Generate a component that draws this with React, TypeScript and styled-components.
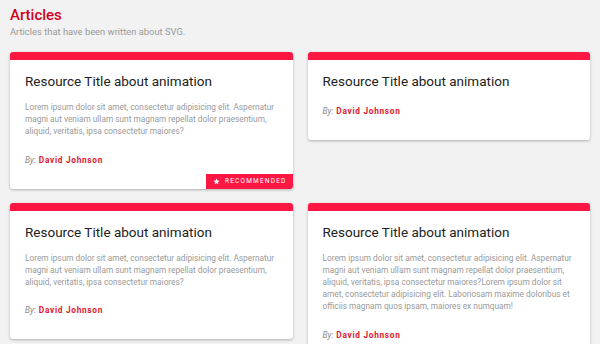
import React from "react";
import styled, { createGlobalStyle } from "styled-components";

const GlobalStyle = createGlobalStyle`
  html, body {
    margin: 0;
    padding: 0;
    background: #f2f2f2;
    font-family: Roboto, "Liberation Sans", sans-serif;
  }
`;

const Page = styled.div`
  padding: 6px 10px 20px;
`;

const Heading = styled.h1`
  margin: 0;

  font-size: 15px;
  font-weight: 500;
  line-height: 18px;
  color: #d0021b;
`;

const Subtitle = styled.p`
  margin: 2px 0 0;

  font-size: 9.4px;
  line-height: 12px;
  color: #999;
`;

const Grid = styled.div`
  display: grid;
  grid-template-columns: 1fr 1fr;
  column-gap: 15px;
  row-gap: 14px;
  align-items: start;

  margin-top: 14px;
`;

const Card = styled.article`
  overflow: hidden;

  position: relative;

  border-top: 8px solid #ff1744;
  border-radius: 3px;

  background: #fff;
  box-shadow: 0 1px 3px rgba(0, 0, 0, 0.28);
`;

const Body = styled.div`
  padding: 13px 12px 23px 15px;
`;

const Title = styled.h2`
  margin: 0;

  font-size: 13.5px;
  font-weight: 400;
  line-height: 17px;
  color: #222;
`;

const Excerpt = styled.p`
  margin: 11px 0 0;

  font-size: 8.3px;
  line-height: 12.2px;
  color: #9a9a9a;
`;

const Byline = styled.p<{ $spaced: boolean }>`
  margin: ${(p) => (p.$spaced ? "16px" : "15px")} 0 0;

  font-size: 8.3px;
  line-height: 12px;
`;

const By = styled.span`
  font-style: italic;
  color: #888;
`;

const Author = styled.span`
  margin-left: 3px;

  font-weight: 700;
  letter-spacing: 0.7px;
  color: #e0182d;
`;

const Badge = styled.div`
  display: flex;
  align-items: center;
  gap: 5px;

  position: absolute;
  right: 0;
  bottom: 0;

  height: 15px;
  padding: 0 6px 0 7px;

  background: #ff1744;

  font-size: 6.5px;
  letter-spacing: 1.2px;
  color: #fff;
`;

const Star = () => (
  <svg width="7" height="7" viewBox="0 0 24 24" fill="#fff">
    <path d="M12 1.8l3.1 7 7.4.6-5.6 4.9 1.7 7.4L12 17.8l-6.6 3.9 1.7-7.4-5.6-4.9 7.4-.6z" />
  </svg>
);

type Article = {
  excerpt?: string;
  recommended?: boolean;
};

const SHORT =
  "Lorem ipsum dolor sit amet, consectetur adipisicing elit. Aspernatur magni aut veniam ullam sunt magnam repellat dolor praesentium, aliquid, veritatis, ipsa consectetur maiores?";

const LONG =
  SHORT +
  "Lorem ipsum dolor sit amet, consectetur adipisicing elit. Laboriosam maxime doloribus et officiis magnam quos ipsam, maiores ex numquam!";

const articles: Article[] = [
  { excerpt: SHORT, recommended: true },
  {},
  { excerpt: SHORT },
  { excerpt: LONG },
];

export default function App() {
  return (
    <>
      <GlobalStyle />
      <Page>
        <Heading>Articles</Heading>
        <Subtitle>Articles that have been written about SVG.</Subtitle>
        <Grid>
          {articles.map((a, i) => (
            <Card key={i}>
              <Body>
                <Title>Resource Title about animation</Title>
                {a.excerpt && <Excerpt>{a.excerpt}</Excerpt>}
                <Byline $spaced={!!a.excerpt}>
                  <By>By:</By>
                  <Author>David Johnson</Author>
                </Byline>
              </Body>
              {a.recommended && (
                <Badge>
                  <Star />
                  RECOMMENDED
                </Badge>
              )}
            </Card>
          ))}
        </Grid>
      </Page>
    </>
  );
}
